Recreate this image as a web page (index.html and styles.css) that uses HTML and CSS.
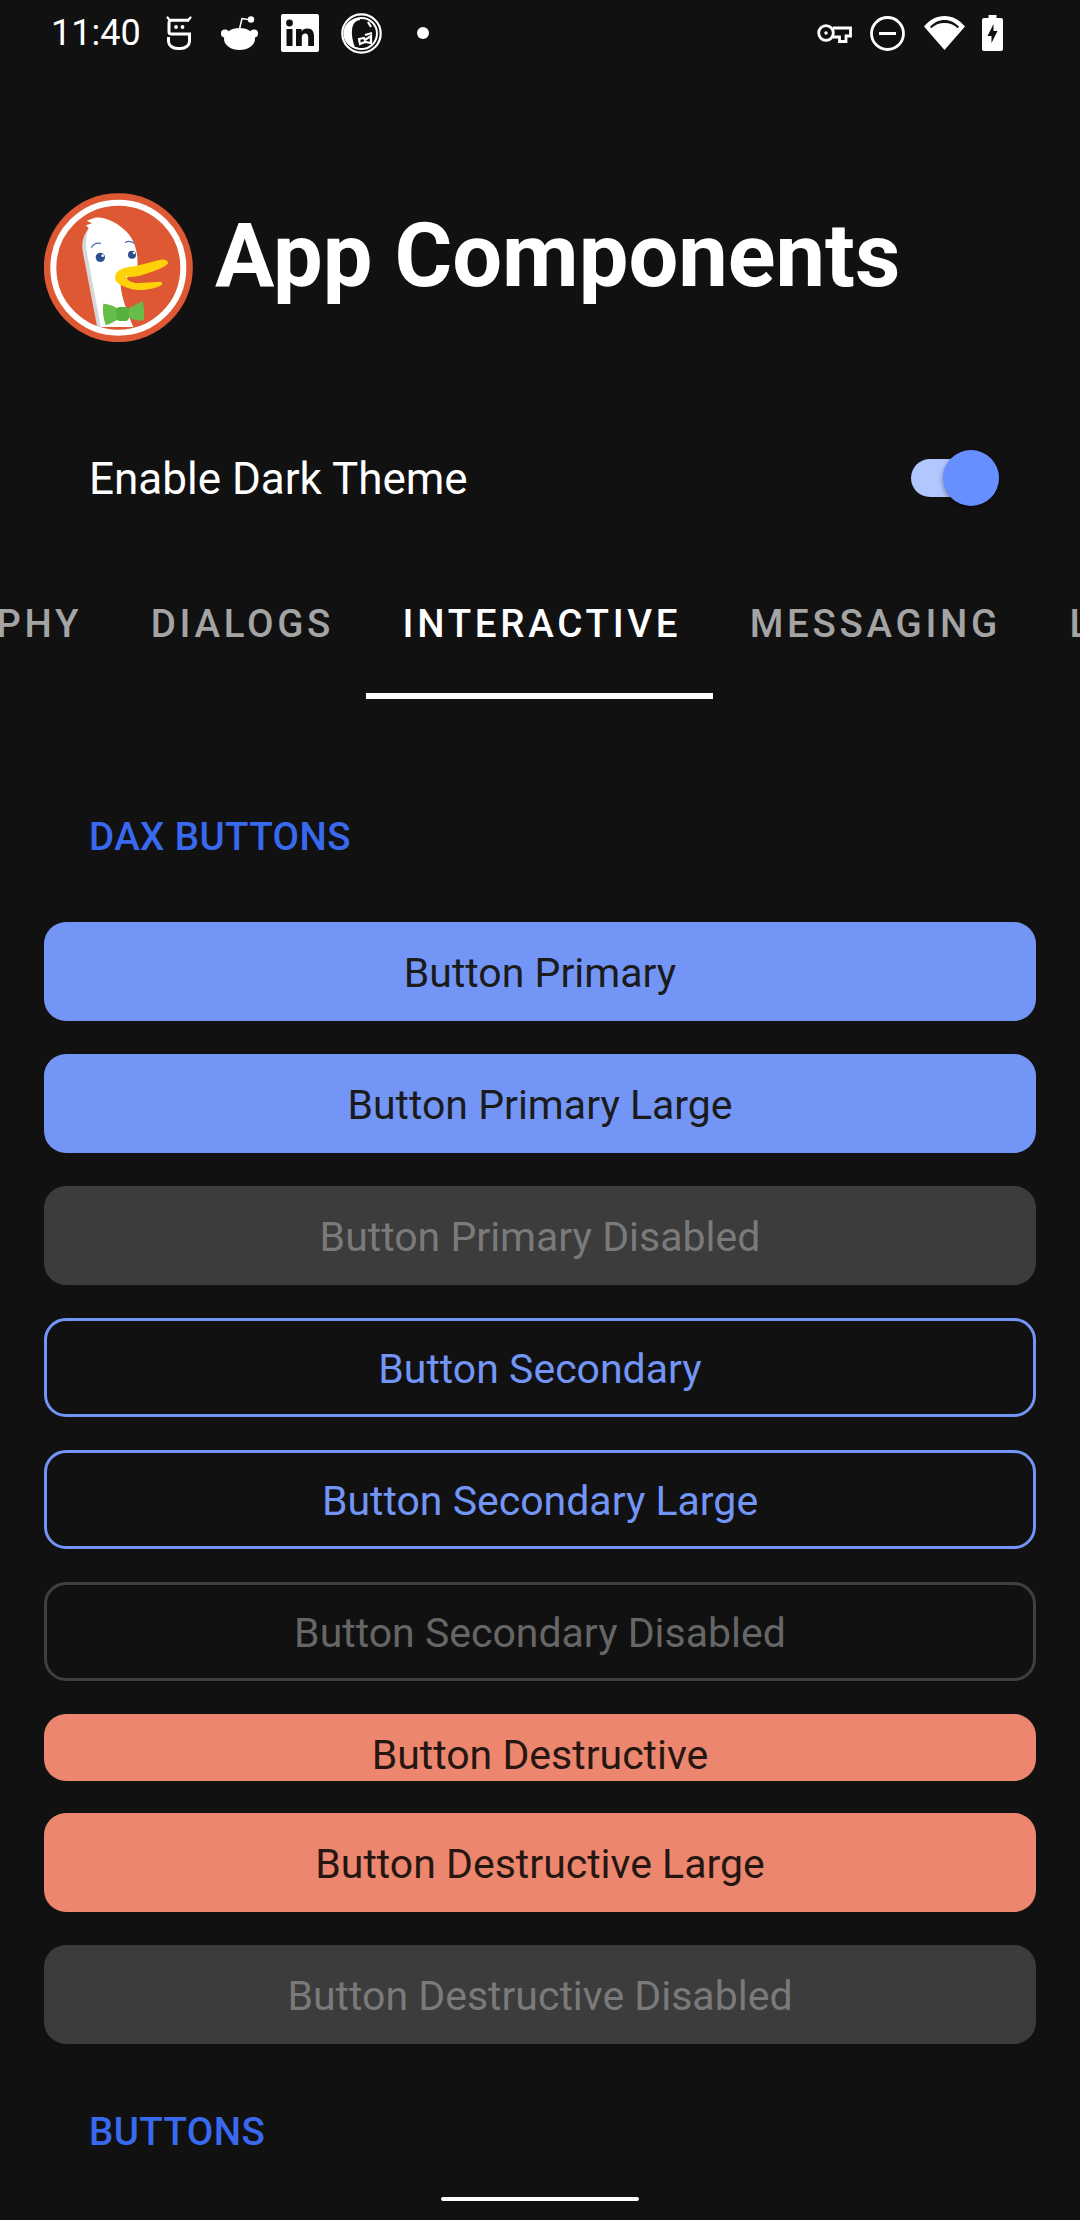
FILE: index.html
```html
<!DOCTYPE html>
<html lang="en">
<head>
<meta charset="utf-8">
<title>App Components</title>
<link rel="stylesheet" href="styles.css">
</head>
<body>
<div class="screen">
  <header class="status">
    <div class="status-left">
      <span class="time">11:40</span>
      <svg class="ic ic-ghost" viewBox="0 0 26 34" fill="none" stroke="#fff" stroke-width="3">
        <path d="M1.500 1.500l2.500 3M24.500 1.500l-2.500 3" stroke-width="2.200" stroke-linecap="round"/>
        <path d="M23 4.200H5.500Q3 4.200 3 7v9q0 2 2.500 2H23.500v7.500a9 7.300 0 0 1-9 7h-3a9 7.300 0 0 1-9-7V21"/>
        <circle cx="10" cy="11" r="1.900" fill="#fff" stroke="none"/>
        <circle cx="16.500" cy="11" r="1.900" fill="#fff" stroke="none"/>
      </svg>
      <svg class="ic ic-reddit" viewBox="0 0 37 34" fill="#fff">
        <ellipse cx="18.500" cy="23" rx="15.500" ry="11"/>
        <circle cx="4" cy="17.500" r="4"/>
        <circle cx="33" cy="17.500" r="4"/>
        <circle cx="30" cy="3.500" r="3.200"/>
        <path d="M18.500 13l2.500-10.500 8 1.300" fill="none" stroke="#fff" stroke-width="1.500"/>
      </svg>
      <svg class="ic ic-linkedin" viewBox="0 0 38 38">
        <rect width="38" height="38" rx="2" fill="#fff"/>
        <circle cx="8.500" cy="9" r="3.400" fill="#111"/>
        <path d="M5.500 15h6v17h-6zM15 15h5.600v2.500c1-1.700 3-3 5.600-3 5.400 0 6.800 3.400 6.800 8V32h-5.800v-8.500c0-2.300-.6-4-2.800-4-2.300 0-3.600 1.600-3.600 4V32H15z" fill="#111"/>
      </svg>
      <svg class="ic ic-ddg" viewBox="0 0 41 41" fill="none" stroke="#fff">
        <circle cx="20.500" cy="20.500" r="19.200" stroke-width="2.200"/>
        <circle cx="20.500" cy="20.500" r="15.500" stroke-width="2"/>
        <path d="M19 5a15.500 15.500 0 0 0-2 31z" fill="#fff" stroke="none"/>
        <path d="M14 34C10 24 9 10 17 7.500c6-1 10 4 11 9l3 2-5 4-2 .5c-3 1-4 4-3 7l2 5z" fill="#111" stroke="none"/>
        <path d="M27 9l3 5M18 26l5-1 1 2 6-4v7l-6-1-5 2zM24 22l7-2" stroke-width="2.200"/>
      </svg>
      <span class="dot"></span>
    </div>
    <div class="status-right">
      <svg class="ic ic-key" viewBox="0 0 35 20" fill="none" stroke="#fff" stroke-width="2.800">
        <circle cx="9" cy="10" r="7.300"/>
        <circle cx="9" cy="10" r="1" fill="#fff" stroke-width="1.500"/>
        <path d="M16 5h17.500v8H29v5.500h-6.500V14H16"/>
      </svg>
      <svg class="ic ic-dnd" viewBox="0 0 35 35" fill="none" stroke="#fff">
        <circle cx="17.500" cy="17.500" r="16" stroke-width="2.800"/>
        <path d="M9 17.500h17" stroke-width="3"/>
      </svg>
      <svg class="ic ic-wifi" viewBox="0 0 41 34" fill="#fff">
        <path fill-rule="evenodd" d="M20.500 34L0 10.500C5.500 4 12.500 0 20.500 0s15 4 20.500 10.500zM6 10.800l1.300 1.500C10.800 8.700 15.400 7 20.500 7s9.700 1.700 13.200 5.300l1.300-1.500C31 6.700 26 4 20.500 4S10 6.700 6 10.800z"/>
      </svg>
      <svg class="ic ic-batt" viewBox="0 0 21 36">
        <path fill="#fff" fill-rule="evenodd" d="M6.500 0h8v3H19a2 2 0 0 1 2 2v29a2 2 0 0 1-2 2H2a2 2 0 0 1-2-2V5a2 2 0 0 1 2-2h4.500zM11.500 9L5.500 21h4v7l6-12h-4z"/>
      </svg>
    </div>
  </header>

  <div class="brand">
    <svg class="logo" viewBox="72 68 447 447">
      <defs><clipPath id="inner"><circle cx="295" cy="292" r="186"/></clipPath></defs>
      <circle cx="295" cy="292" r="223.500" fill="#de5833"/>
      <circle cx="295" cy="292" r="195" fill="none" stroke="#fff" stroke-width="18"/>
      <g clip-path="url(#inner)">
        <path d="M200 151l24-9c18-2 38 2 58 14 28 16 52 38 62 68 8 22 10 46 8 70l-50 46c0 30 14 70 38 130H236l-42-225c-6-30-4-48 12-71l-8-9 18-6z" fill="#fff"/>
        <path d="M204 178c-16 20-20 40-16 65l46 240 10-5-42-225c-6-30-4-52 2-75z" fill="#d5d7d8"/>
      </g>
      <circle cx="241" cy="261" r="14" fill="#2d4f8e"/>
      <circle cx="248" cy="256" r="4" fill="#fff"/>
      <circle cx="336" cy="253" r="12" fill="#2d4f8e"/>
      <circle cx="342" cy="248" r="3.500" fill="#fff"/>
      <path d="M214 232q8-17 29-13M315 217q14-9 29 3" fill="none" stroke="#4a6db8" stroke-width="3.500"/>
      <path d="M285 320c2-22 30-30 60-32l76-20c14-2 26 4 22 12-8 12-60 30-92 38-14 3-28 3-33 0 2 14 22 22 40 20l62-4c10 0 8 10-2 14-28 12-62 14-84 8-30-8-50-18-49-36z" fill="#fdd209"/>
      <path d="M250 400c20 2 35 8 42 14h34c14-6 28-16 42-22 4 18 6 40 3 58-14 2-30-2-42-8l-34 4c-12 8-26 16-38 18-8-22-10-44-7-64z" fill="#67bd4a"/>
      <rect x="289" y="410" width="38" height="42" rx="11" fill="#55b13d"/>
    </svg>
    <h1 class="title">App Components</h1>
  </div>

  <div class="theme-row">
    <span class="theme-label">Enable Dark Theme</span>
    <span class="switch"><span class="switch-thumb"></span></span>
  </div>

  <nav class="tabs">
    <span class="tab">TYPOGRAPHY</span>
    <span class="tab">DIALOGS</span>
    <span class="tab tab-active">INTERACTIVE</span>
    <span class="tab">MESSAGING</span>
    <span class="tab">LIST ITEMS</span>
  </nav>

  <main class="content">
    <h2 class="section">DAX BUTTONS</h2>
    <div class="buttons">
      <div class="btn btn-primary">Button Primary</div>
      <div class="btn btn-primary">Button Primary Large</div>
      <div class="btn btn-disabled">Button Primary Disabled</div>
      <div class="btn btn-secondary">Button Secondary</div>
      <div class="btn btn-secondary">Button Secondary Large</div>
      <div class="btn btn-secondary-disabled">Button Secondary Disabled</div>
      <div class="btn btn-destructive btn-small">Button Destructive</div>
      <div class="btn btn-destructive">Button Destructive Large</div>
      <div class="btn btn-disabled">Button Destructive Disabled</div>
    </div>
    <h2 class="section section-next">BUTTONS</h2>
  </main>

  <div class="home-bar"></div>
</div>
</body>
</html>
```
FILE: styles.css
```css
* { box-sizing: border-box; }
html, body { margin: 0; padding: 0; background: #111; }
body { font-family: Roboto, "Liberation Sans", sans-serif; color: #fff; }

.screen { position: relative; width: 1080px; height: 2220px; overflow: hidden; background: #111; }

.status { display: flex; justify-content: space-between; align-items: center; height: 66px; padding: 0 77px 0 51px; }
.status-left, .status-right { display: flex; align-items: center; }
.time { font-size: 36px; width: 89px; line-height: 66px; }
.ic { display: block; flex: none; }
.ic-ghost { width: 26px; height: 34px; margin-left: 26px; }
.ic-reddit { width: 37px; height: 34px; margin-left: 29px; }
.ic-linkedin { width: 38px; height: 38px; margin-left: 23px; }
.ic-ddg { width: 41px; height: 41px; margin-left: 22px; }
.dot { width: 12px; height: 12px; margin-left: 35px; border-radius: 50%; background: #fff; }
.ic-key { width: 35px; height: 20px; }
.ic-dnd { width: 35px; height: 35px; margin-left: 18px; }
.ic-wifi { width: 41px; height: 34px; margin-left: 19px; }
.ic-batt { width: 21px; height: 36px; margin-left: 17px; }

.brand { display: flex; align-items: center; gap: 22px; margin-top: 127px; padding-left: 44px; height: 149px; }
.logo { width: 149px; height: 149px; display: block; flex: none; }
.title { margin: 0 0 23px; font-size: 88.400px; font-weight: 700; line-height: 1; }

.theme-row { display: flex; align-items: center; justify-content: space-between; height: 78px; margin-top: 97px; padding: 0 89px; }
.theme-label { position: relative; top: 1px; font-size: 44px; }
.switch { position: relative; display: block; width: 80px; height: 38px; border-radius: 19px; background: #b3c7ff; }
.switch-thumb { position: absolute; right: -8px; top: -9px; width: 56px; height: 56px; border-radius: 50%; background: #678fff; box-shadow: 0 2px 5px rgba(0,0,0,.4); }

.tabs { display: flex; height: 152px; margin-top: 30px; margin-left: -240.600px; }
.tab { flex: none; display: flex; align-items: center; height: 100%; padding: 0 32px 0 36.500px; font-size: 38.500px; font-weight: 500; letter-spacing: 3.700px; color: #a4a4a4; white-space: nowrap; }
.tab-active { color: #fff; box-shadow: inset 0 -6px 0 #fff; }

.content { padding: 0 44px; }
.section { margin: 0; padding-left: 45px; font-size: 38.500px; font-weight: 500; line-height: 50px; letter-spacing: .4px; color: #3969ef; }
.content > .section:first-child { margin-top: 113px; }
.section-next { margin-top: 63px; }

.buttons { display: flex; flex-direction: column; gap: 33px; margin-top: 60px; }
.btn { display: flex; align-items: center; justify-content: center; height: 99px; padding-top: 2px; border-radius: 22px; font-size: 41px; }
.btn-primary { background: #7295f6; color: #1b1b1b; }
.btn-disabled { background: #3c3c3c; color: #7a7a7a; }
.btn-secondary { border: 3px solid #7295f6; color: #7295f6; }
.btn-secondary-disabled { border: 3px solid #404040; color: #666; }
.btn-destructive { background: #ec866e; color: #261612; }
.btn-small { height: 67px; margin-bottom: -1px; padding-top: 14px; }

.home-bar { position: absolute; left: 441px; top: 2197px; width: 198px; height: 4px; border-radius: 2px; background: #fff; }
```
